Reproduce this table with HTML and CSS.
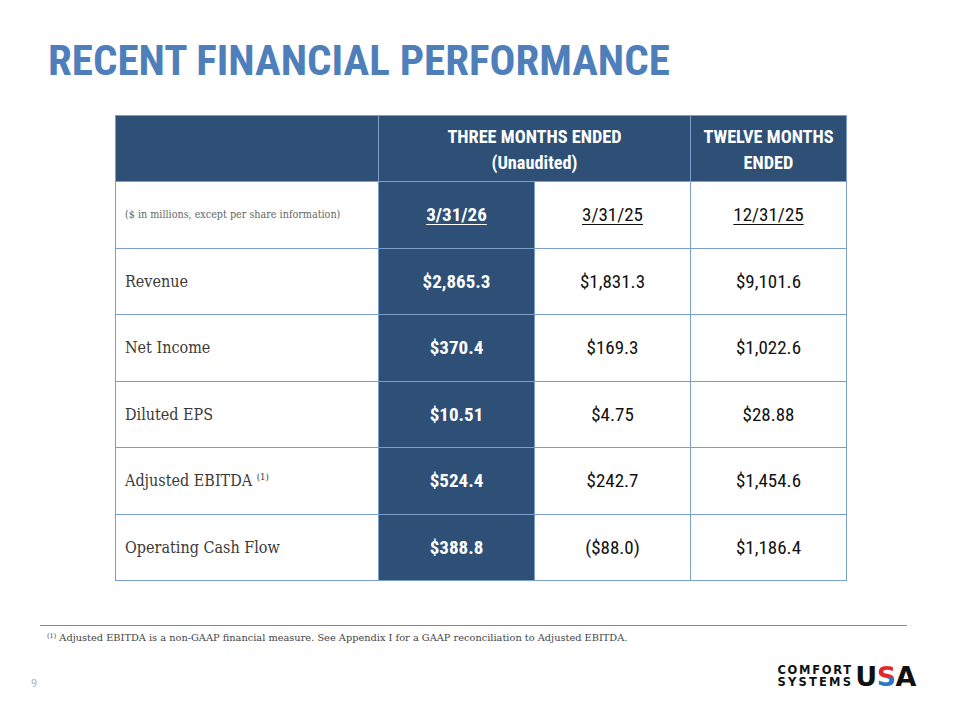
FILE: index.html
```html
<!DOCTYPE html>
<html>
<head>
<meta charset="utf-8">
<link rel="stylesheet" href="styles.css">
</head>
<body>
<div class="slide">
  <h1 class="title">RECENT FINANCIAL PERFORMANCE</h1>
  <table class="fin">
    <colgroup>
      <col class="c-label"><col class="c-num"><col class="c-num"><col class="c-num">
    </colgroup>
    <thead>
      <tr class="head">
        <th></th>
        <th colspan="2">THREE MONTHS ENDED<br>(Unaudited)</th>
        <th>TWELVE MONTHS<br>ENDED</th>
      </tr>
    </thead>
    <tbody>
      <tr>
        <td class="label note">($ in millions, except per share information)</td>
        <td class="cur date"><u>3/31/26</u></td>
        <td class="date"><u>3/31/25</u></td>
        <td class="date"><u>12/31/25</u></td>
      </tr>
      <tr>
        <td class="label">Revenue</td>
        <td class="cur">$2,865.3</td>
        <td>$1,831.3</td>
        <td>$9,101.6</td>
      </tr>
      <tr>
        <td class="label">Net Income</td>
        <td class="cur">$370.4</td>
        <td>$169.3</td>
        <td>$1,022.6</td>
      </tr>
      <tr>
        <td class="label">Diluted EPS</td>
        <td class="cur">$10.51</td>
        <td>$4.75</td>
        <td>$28.88</td>
      </tr>
      <tr>
        <td class="label">Adjusted EBITDA <sup>(1)</sup></td>
        <td class="cur">$524.4</td>
        <td>$242.7</td>
        <td>$1,454.6</td>
      </tr>
      <tr>
        <td class="label">Operating Cash Flow</td>
        <td class="cur">$388.8</td>
        <td>($88.0)</td>
        <td>$1,186.4</td>
      </tr>
    </tbody>
  </table>
  <div class="footnote">
    <p><sup>(1)</sup> Adjusted EBITDA is a non-GAAP financial measure. See Appendix I for a GAAP reconciliation to Adjusted EBITDA.</p>
  </div>
  <div class="bottom">
    <span class="page">9</span>
    <div class="logo">
      <div class="logo-words"><span class="w1">COMFORT</span><span class="w2">SYSTEMS</span></div>
      <div class="logo-usa"><span class="u">U</span><span class="s">S</span><span class="a">A</span></div>
    </div>
  </div>
</div>
</body>
</html>
```
FILE: styles.css
```css
* { box-sizing: border-box; }
html, body { margin: 0; padding: 0; background: #fff; }
.slide {
  width: 960px;
  height: 720px;
  position: relative;
  overflow: hidden;
  display: flex;
  flex-direction: column;
}
.title {
  margin: 0;
  padding: 35px 0 0 48px;
  height: 115px;
  font-family: "Roboto Condensed", "Roboto", sans-serif;
  font-stretch: condensed;
  font-weight: 700;
  font-size: 43px;
  line-height: 50px;
  color: #4f7fbb;
  letter-spacing: 0;
}
.fin {
  margin-left: 115px;
  width: 731px;
  border-collapse: collapse;
  table-layout: fixed;
}
.c-label { width: 263px; }
.c-num { width: 156px; }
.fin th, .fin td {
  border: 1px solid #7a9fcb;
  padding: 0;
  text-align: center;
  vertical-align: middle;
}
.head th {
  background: #2e5077;
  color: #fff;
  height: 66px;
  font-family: "Roboto Condensed", "Roboto", sans-serif;
  font-stretch: condensed;
  font-weight: 700;
  font-size: 18.3px;
  line-height: 26px;
  padding-top: 2px;
}
.fin td {
  height: 66.5px;
  font-family: "Roboto Condensed", "Roboto", sans-serif;
  font-stretch: condensed;
  font-size: 19px;
  color: #111;
}
.fin td.cur {
  background: #2e5077;
  color: #fff;
  font-weight: 700;
}
.fin td.label {
  text-align: left;
  padding-left: 9px;
  font-family: "DejaVu Serif", serif;
  font-size: 16px;
  color: #3a3a3a;
}
.fin td.label.note {
  font-size: 10.7px;
  color: #666;
}
.fin td.label sup {
  font-size: 9.5px;
  vertical-align: 6px;
  line-height: 0;
}
.date u { text-decoration-thickness: 1px; text-underline-offset: 3px; }
.footnote {
  margin: 44px 53px 0 40px;
  border-top: 1px solid #8a8a8a;
  padding: 6px 0 0 7px;
}
.footnote p {
  margin: 0;
  font-family: "DejaVu Serif", serif;
  font-size: 9.8px;
  color: #444;
}
.footnote sup { font-size: 6.5px; vertical-align: 3px; line-height: 0; }
.bottom {
  display: flex;
  justify-content: space-between;
  align-items: center;
  padding: 20px 44px 0 31px;
}
.page {
  font-family: "Roboto", sans-serif;
  font-size: 11px;
  color: #a3b4ca;
  margin-top: 14px;
}
.logo {
  display: flex;
  align-items: center;
  gap: 2px;
}
.logo-words {
  display: flex;
  flex-direction: column;
  font-family: "DejaVu Sans", sans-serif;
  font-weight: 900;
  font-size: 11.5px;
  line-height: 11.5px;
  color: #111;
}
.logo-words .w1 { letter-spacing: 1.7px; }
.logo-words .w2 { letter-spacing: 2.2px; }
.logo-usa {
  display: flex;
  font-family: "DejaVu Sans", sans-serif;
  font-weight: 900;
  font-size: 27px;
  line-height: 24px;
  color: #111;
  letter-spacing: -0.5px;
}
.logo-usa .s {
  background: linear-gradient(#e3262b 0 50%, #2a78c8 50% 100%);
  -webkit-background-clip: text;
  background-clip: text;
  color: transparent;
}
```
